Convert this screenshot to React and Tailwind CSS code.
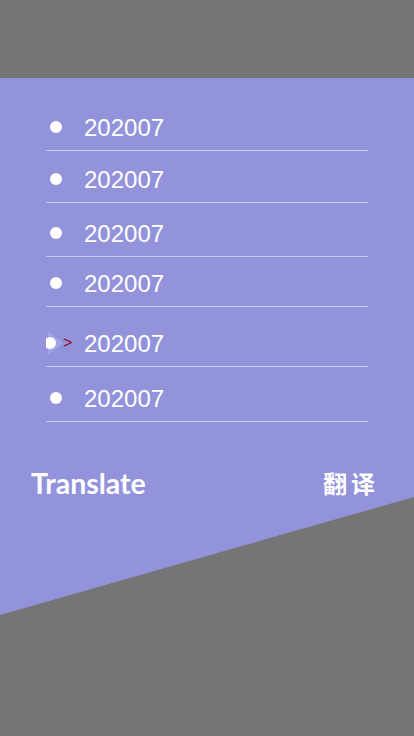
import React from 'react'

const rows = [
  { mt: 'mt-0' },
  { mt: 'mt-[5px]' },
  { mt: 'mt-[7px]' },
  { mt: 'mt-[3px]' },
  { mt: 'mt-[13px]', active: true },
  { mt: 'mt-[8px]' },
]

function Row({ mt, active }) {
  return (
    <div className={`${mt} ml-[46px] w-[322px] border-b border-[#c9c9ee]`}>
      <div className="relative flex h-[46px] items-center">
        {active ? (
          <div className="absolute left-0 top-0 flex h-full items-center">
            <svg width="30" height="46" viewBox="0 0 30 46" className="absolute left-0 top-0">
              <polygon points="2,11 17,23 2,35" fill="#a9b4f2" opacity="0.55" />
              <circle cx="4" cy="23" r="6" fill="#ffffff" />
            </svg>
            <span className="absolute left-[17px] top-[14px] font-['Liberation_Sans',sans-serif] text-[16px] leading-[18px] text-[#8b0b18]">
              &gt;
            </span>
          </div>
        ) : (
          <span className="absolute left-[4px] top-[17px] h-[12px] w-[12px] rounded-full bg-white" />
        )}
        <span className="ml-[38px] mt-[2px] font-['Liberation_Sans',sans-serif] text-[24px] leading-[28px] text-white">
          202007
        </span>
      </div>
    </div>
  )
}

export default function App() {
  return (
    <div className="flow-root h-[736px] w-[414px] overflow-hidden bg-[#767575]">
      <div className="mt-[78px] h-[537px] pt-[26px] bg-[#9393db] [clip-path:polygon(0_0,100%_0,100%_419px,0_537px)]">
        {rows.map((r, i) => (
          <Row key={i} {...r} />
        ))}
        <div className="mt-[45px] flex items-center justify-between pl-[31px] pr-[35px]">
          <span className="font-['Lato',sans-serif] text-[28.5px] font-bold leading-[32px] text-white">
            Translate
          </span>
          <span className="font-['Noto_Sans_CJK_SC',sans-serif] text-[24px] font-bold leading-[28px] tracking-[4px] text-white">
            翻译
          </span>
        </div>
      </div>
    </div>
  )
}
